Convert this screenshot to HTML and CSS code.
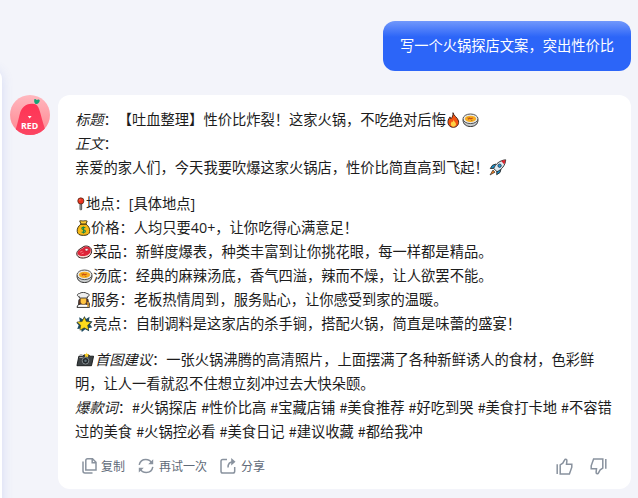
FILE: index.html
```html
<!DOCTYPE html>
<html lang="zh-CN">

<head>
  <meta charset="utf-8">
  <title>聊天</title>
  <link rel="stylesheet" href="styles.css">
</head>

<body>

  <!-- shared emoji -->
  <svg class="defs" width="0" height="0">
    <symbol id="stew" viewBox="0 0 17 16">
      <path d="M1 7.5C1 12.6 4.5 14.5 8.5 14.5S16 12.6 16 7.5z" fill="#c9cccd" stroke="#333"/>
      <ellipse cx="8.5" cy="6.8" rx="7.5" ry="4.8" fill="#e8eaea" stroke="#444" stroke-width=".9"/>
      <ellipse cx="8.5" cy="6.8" rx="5.6" ry="3.1" fill="#f8ad20"/>
      <path d="M6 7.2l1.6-1.2 1.3.9 1.8-.9" fill="none" stroke="#c64b16" stroke-width="1.2"/>
      <path d="M5.3 5.8h1.2M9 8.5h1.5" stroke="#b8821c"/>
    </symbol>
  </svg>

  <aside class="panel"></aside>

  <main class="chat">
    <div class="question">写一个火锅探店文案，突出性价比</div>

    <div class="reply">
      <svg class="avatar" viewBox="0 0 40 40">
        <defs>
          <linearGradient id="bg" x2="0" y2="1"><stop stop-color="#ffb8bf"/><stop offset="1" stop-color="#ff858f"/></linearGradient>
          <linearGradient id="body" x2="0" y2="1"><stop stop-color="#ff3455"/><stop offset="1" stop-color="#fb4562"/></linearGradient>
          <clipPath id="round"><circle cx="20" cy="20" r="20"/></clipPath>
        </defs>
        <g clip-path="url(#round)">
          <path d="M0 0h40v40H0z" fill="url(#bg)"/>
          <path d="M4 40C7 31 8 26 9.5 20c1.8-7.5 5.6-10.8 12-11.2 3.2-.2 5.5.6 6.9 3.7C31 18 32 27 36 36v4z" fill="url(#body)"/>
          <path d="M24.2 5.4c-.2-1.5 1.3-2 2.5-.4 1.4-1.2 3.4-.5 3 .9-.5 2-2 3.1-3.9 3.2-1.2-.8-1.8-2.4-1.6-3.7z" fill="#17a477"/>
          <path d="M17.8 21h3.8l-1.9 2.4z" fill="#fff"/>
          <text x="19.6" y="34.2">RED</text>
        </g>
      </svg>

      <div class="card">
        <div class="text">
          <p>
            <em>标题</em>：【吐血整理】性价比炸裂！这家火锅，不吃绝对后悔<svg class="emoji fire" viewBox="0 0 15 16"><path d="M7 .7c.4 3 4.8 4.7 5.5 8.3.7 3.7-1.8 6.3-5.1 6.3S1.7 13 2 9.5c.1-2 1.2-3.2 2-4.6.5.6.7 1.2.8 1.9C6.6 5.2 7.2 3 7 .7z" fill="#f15312" stroke="#35180e" stroke-width=".9"/><path d="M7.3 7.5c.2 2 2.8 2.6 2.7 4.8-.1 1.5-1.2 2.4-2.6 2.4s-2.7-1-2.6-2.6c0-1.4.8-2 1.1-2.9.4.3.6.6.7 1 .5-.7.8-1.6.7-2.7z" fill="#ffd143"/></svg><svg class="emoji stew"><use href="#stew"/></svg><br>
            <em>正文</em>：<br>
            亲爱的家人们，今天我要吹爆这家火锅店，性价比简直高到飞起！<svg class="emoji rocket" viewBox="0 0 18 17"><path d="M7 5L3.5 6.2 1.3 9.5l3.5-.2M12 10l-1 3.5-3.3 2.2.2-3.6" fill="#1697d5" stroke="#222" stroke-width=".9"/><path d="M4 11l-3 5 5-2.8z" fill="#f17a18" stroke="#333" stroke-width=".7"/><path d="M4.7 9.5C6.5 5 10.8 1.3 16.7.8 16.4 6.3 12.6 10.7 8 12.7z" fill="#dceaf2" stroke="#222" stroke-width=".9"/><path d="M12.1 1.9c1.4-.6 2.8-.9 4.3-.9-.1 1.6-.5 3.1-1.1 4.4z" fill="#d8252f"/><circle cx="10.6" cy="6.7" r="1.7" fill="#249bd4" stroke="#223" stroke-width=".7"/></svg>
          </p>
          <p>
            <svg class="emoji pin" viewBox="0 0 12 16"><path d="M4.8 7h2v7.4l-1 1-1-1z" fill="#bbb" stroke="#222" stroke-width=".9"/><circle cx="5.8" cy="4.3" r="3.7" fill="#ed321c" stroke="#321" stroke-width=".8"/><circle cx="4.7" cy="3.1" r=".8" fill="#ff806c"/></svg>地点：<span class="latin">[</span>具体地点<span class="latin">]</span><br>
            <svg class="emoji bag" viewBox="0 0 15 16"><path d="M5 4C2.5 6 .9 8.4 1.2 11.4c.2 2.8 2.3 4 6.2 4s6.1-1.2 6.3-4C14 8.4 12.5 6 9.9 4z" fill="#f7b916" stroke="#322910" stroke-width=".9"/><path d="M3.7.9c1.2-.5 2.2.2 3.8 0 1.4-.2 2.5-.4 3.7.2L10 4H5z" fill="#ffcb36" stroke="#322910" stroke-width=".9"/><path d="M9.3 7.8c-1.3-.8-3.6-.6-3.5.7.2 1.6 3.5.9 3.6 2.7 0 1.5-2.5 1.6-3.8.7M7.5 6.4v7" fill="none" stroke="#19864a" stroke-width="1.1"/></svg>价格：人均只要<span class="latin">40+</span>，让你吃得心满意足！<br>
            <svg class="emoji meat" viewBox="0 0 17 16"><path d="M.8 10C.7 6 4.5 5 7 3c2.7-2 7.1-.8 8.3 2.2 1.2 3.5-1.2 7.2-4.6 8.2-4 1.4-9.6.7-9.9-3.4z" fill="#f6d8d1" stroke="#351c1c"/><path d="M1.5 8.8C1.8 6.2 5.5 5.3 7.7 3.4c2.3-1.7 6-.6 6.9 1.9.8 2.7-1.3 5.4-4.3 6.2-3.5 1.1-9.1.7-8.8-2.7z" fill="#df2338"/><ellipse cx="10.6" cy="5.8" rx="1.8" ry="1.2" fill="#fff" stroke="#a2142a" stroke-width=".7"/><path d="M4 8.2l2.5-.9m-1 2.6l2.3-.8" stroke="#ff8890" stroke-width=".8"/></svg>菜品：新鲜度爆表，种类丰富到让你挑花眼，每一样都是精品。<br>
            <svg class="emoji stew"><use href="#stew"/></svg>汤底：经典的麻辣汤底，香气四溢，辣而不燥，让人欲罢不能。<br>
            <svg class="emoji cook" viewBox="0 0 15 16"><path d="M3 7.5C2.1 10 3 12 2 14h11c1-1 .6-3-.5-4l-.6-3z" fill="#5d3826" stroke="#222" stroke-width=".7"/><path d="M1 15.4c.3-2.8 2.3-3.5 6.3-3.5s5.8.8 6.2 3.5z" fill="#fff" stroke="#222" stroke-width=".9"/><path d="M4.3 5.2h6.2v4.6c0 3.5-6.2 3.5-6.2 0z" fill="#ffc542" stroke="#5d3826" stroke-width=".6"/><path d="M3.3 6V4.6C.8 4.6.7 1.6 3.5 1.5 5 0 9.5 0 10.9 1.5c3-.1 2.8 3.1.5 3.2V6z" fill="#eee" stroke="#333" stroke-width=".9"/><path d="M12 10v5" stroke="#d99b2b" stroke-width="1.5"/></svg>服务：老板热情周到，服务贴心，让你感受到家的温暖。<br>
            <svg class="emoji star" viewBox="0 0 17 16"><path d="M8.5 0l1.5 3L13.6.8l-.7 4 3.7.8-2.6 2.8 2.3 3.1-3.5.4.3 3.3-3.9-1.9L5.8 16l-.9-3.5-3.7.6 1.5-3.9L.2 6.4l3.6-1L3.2 1.2l3.6 2z" fill="#1c4a60"/><path d="M8.3 1.2l2 4.3 4.9.5-3.6 3.3 1 4.8-4.4-2.3-4.3 2.4.8-4.9L1 6l5.2-.5z" fill="#ffdc1c" stroke="#433a12" stroke-width=".5"/></svg>亮点：自制调料是这家店的杀手锏，搭配火锅，简直是味蕾的盛宴！
          </p>
          <p>
            <svg class="emoji camera" viewBox="0 0 20 16"><path d="M3 4h4l1.4-1.5h5L14.5 4h4l-2.2 10H1z" fill="#3c4144" stroke="#171a1b"/><path d="M4 3.5l.3-1.2h2.5M3.6 5.4h3.5" stroke="#aaa" fill="none"/><circle cx="10" cy="8.8" r="3.5" fill="#22282c" stroke="#858c8f"/><circle cx="10" cy="8.8" r="1.3" fill="#65777f"/><path d="M11.3 0l.7 1.9 2 .2-1.5 1.3.3 2-1.7-1-1.7.9.4-1.9L8.5 2l2.1-.2z" fill="#ffd32a"/></svg><em>首图建议</em>：一张火锅沸腾的高清照片，上面摆满了各种新鲜诱人的食材，色彩鲜<br>
            明，让人一看就忍不住想立刻冲过去大快朵颐。<br>
            <span class="tags"><em>爆款词</em>：#火锅探店 #性价比高 #宝藏店铺 #美食推荐 #好吃到哭 #美食打卡地 #不容错<br>
            过的美食 #火锅控必看 #美食日记 #建议收藏 #都给我冲</span>
          </p>
        </div>

        <div class="actions">
          <button class="action copy">
            <svg class="icon" viewBox="0 0 16 16"><path d="M5.5.8h5L14 4.3v7.8H3.8V2.5q0-1.7 1.7-1.7zM10.2 1v3.7H14M1 3.5V13q0 2 2 2h7.5"/></svg>复制
          </button>
          <button class="action retry">
            <svg class="icon" viewBox="0 0 16 16"><path d="M1.2 6.8C2 3.3 4.5 1.4 7.8 1.4c2.8 0 4.8 1.2 6 3.5M14.8 8.8c-.6 3.5-3.3 5.6-6.6 5.6-2.8 0-4.9-1.3-6.1-3.6"/><path class="solid" d="M15.2 1.2v5.1h-5zM.8 14.6V9.7h5z"/></svg>再试一次
          </button>
          <button class="action share">
            <svg class="icon" viewBox="0 0 16 16"><path d="M7 1.5H2.8Q1 1.5 1 3.3v9.9Q1 15 2.8 15h10.1q1.8 0 1.8-1.8V9M8 9.5c0-4 1.7-5.7 5.5-5.7"/><path class="solid" d="M11.2 0l4.3 3.8-4.3 3.6z"/></svg>分享
          </button>
          <button class="action vote up">
            <svg class="icon" viewBox="0 0 17 17"><path d="M1.2 6.2V16M4.2 6.8V16h9.2l2.4-6.8V6.3h-5.3l.4-3.6c.1-1.8-1.8-2-2.4-.6L6.8 5.2z"/></svg>
          </button>
          <button class="action vote down">
            <svg class="icon" viewBox="0 0 17 17"><path d="M15.8 1v9.8M12.8 10.2V1H3.6L1.2 7.8v2.9h5.3l-.4 3.6c-.1 1.8 1.8 2 2.4.6l1.7-3.1z"/></svg>
          </button>
        </div>
      </div>
    </div>
  </main>

</body>

</html>
```
FILE: styles.css
```css
body {
  margin: 0;
  height: 498px;
  overflow: hidden;
  background-color: #f3f4fa;
  color: #1c1c1c;
  font-family: "Noto Sans CJK SC", sans-serif;
  font-size: 14.28px;
  text-spacing-trim: space-all;
}

.defs {
  position: absolute;
}

/* edge of the sidebar, lying under the chat */
.panel {
  position: absolute;
  top: 68px;
  left: -20px;
  width: 22px;
  height: 450px;
  border-radius: 12px;
  background-color: #fff;
  box-shadow: 0 2px 12px rgba(70, 100, 220, 0.17);
}

.chat {
  display: flex;
  flex-direction: column;
  gap: 24px;
  padding: 21px 7px 0 10px;
}

.question {
  align-self: flex-end;
  box-sizing: border-box;
  width: 248px;
  height: 50px;
  padding-left: 17px;
  border-radius: 12px;
  background: linear-gradient(#7198fb 0, #2c65f8 16px);
  color: #fff;
  line-height: 48px;
  white-space: nowrap;
}

.reply {
  display: flex;
  gap: 8px;
}

.avatar {
  width: 40px;
  height: 40px;
}

.avatar text {
  fill: #fff;
  font: bold 8.8px "Open Sans", sans-serif;
  text-anchor: middle;
}

.card {
  box-sizing: border-box;
  width: 573px;
  height: 394px;
  padding: 12px 17px 0;
  border-radius: 12px;
  background-color: #fff;
}

.text {
  line-height: 24px;
  white-space: nowrap;
}

.text p {
  margin: 0 0 12px;
}

.latin {
  font-family: "Open Sans", sans-serif;
  line-height: 1;
}

.tags {
  word-spacing: 0.95px;
}

.emoji {
  height: 16px;
  margin-left: 1px;
  vertical-align: -3px;
}

.fire {
  width: 15px;
  margin-left: 0;
}

.stew {
  width: 17px;
}

.rocket {
  width: 18px;
  height: 17px;
  margin-left: 0;
}

.pin {
  width: 10px;
}

.bag {
  width: 15px;
}

.meat,
.star {
  width: 17px;
}

.cook {
  width: 15px;
}

.camera {
  width: 19px;
}

.actions {
  display: flex;
  align-items: center;
  height: 20px;
  padding: 1px 7px 0 7px;
}

.action {
  display: flex;
  align-items: center;
  gap: 3px;
  padding: 0;
  border: 0;
  background: none;
  color: #606a78;
  font: 12px/20px "Noto Sans CJK SC", sans-serif;
  white-space: nowrap;
}

.retry {
  margin-left: 13px;
  gap: 5px;
}

.share {
  margin-left: 13px;
  gap: 5px;
}

.up {
  margin-left: auto;
}

.down {
  margin-left: 17px;
}

.icon {
  width: 16px;
  height: 16px;
  fill: none;
  stroke: #89929e;
  stroke-width: 1.5;
}

.solid {
  fill: #89929e;
  stroke: none;
}

.vote .icon {
  width: 17px;
  height: 17px;
}
```
